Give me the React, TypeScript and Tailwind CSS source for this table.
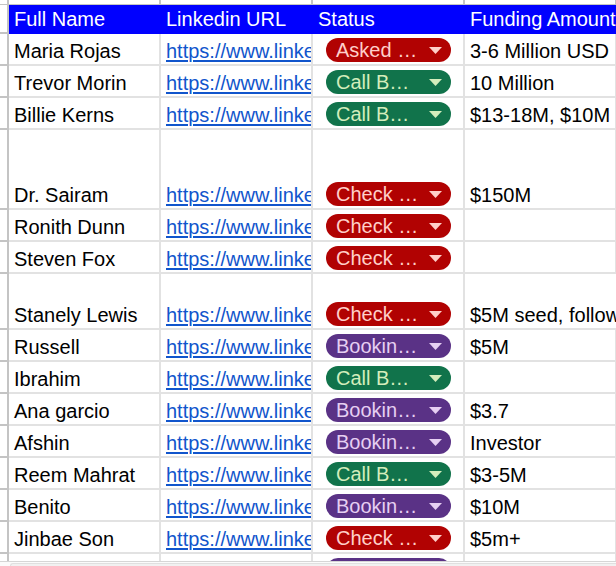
import React from "react";

type Status = "asked" | "call" | "check" | "booking";

type Row = {
  name: string;
  status: Status;
  funding: string;
  h: string;
  spill?: boolean;
};

const rows: Row[] = [
  { name: "Maria Rojas", status: "asked", funding: "3-6 Million USD", h: "h-[32px]" },
  { name: "Trevor Morin", status: "call", funding: "10 Million", h: "h-[32px]" },
  { name: "Billie Kerns", status: "call", funding: "$13-18M, $10M", h: "h-[32px]" },
  { name: "Dr. Sairam", status: "check", funding: "$150M", h: "h-[80px]" },
  { name: "Ronith Dunn", status: "check", funding: "", h: "h-[32px]" },
  { name: "Steven Fox", status: "check", funding: "", h: "h-[32px]" },
  { name: "Stanely Lewis", status: "check", funding: "$5M seed, follow on", h: "h-[56px]", spill: true },
  { name: "Russell", status: "booking", funding: "$5M", h: "h-[32px]" },
  { name: "Ibrahim", status: "call", funding: "", h: "h-[32px]" },
  { name: "Ana garcio", status: "booking", funding: "$3.7", h: "h-[32px]" },
  { name: "Afshin", status: "booking", funding: "Investor", h: "h-[32px]" },
  { name: "Reem Mahrat", status: "call", funding: "$3-5M", h: "h-[32px]" },
  { name: "Benito", status: "booking", funding: "$10M", h: "h-[32px]" },
  { name: "Jinbae Son", status: "check", funding: "$5m+", h: "h-[32px]" },
  { name: "", status: "booking", funding: "", h: "h-[32px]" },
];

const chips: Record<Status, { label: string; bg: string; fg: string; fill: string }> = {
  asked: { label: "Asked …", bg: "bg-[#b10202]", fg: "text-[#ffcfc9]", fill: "#ffcfc9" },
  check: { label: "Check …", bg: "bg-[#b10202]", fg: "text-[#ffcfc9]", fill: "#ffcfc9" },
  call: { label: "Call B…", bg: "bg-[#11734b]", fg: "text-[#d4edbc]", fill: "#d4edbc" },
  booking: { label: "Bookin…", bg: "bg-[#5a3286]", fg: "text-[#e6cff2]", fill: "#e6cff2" },
};

const cell = "flex items-end overflow-hidden whitespace-nowrap border-b-2 border-r-2 border-[#e2e2e2] pl-[5px] pb-[1px]";

function StatusChip({ status }: { status: Status }) {
  const c = chips[status];
  return (
    <div
      className={`ml-[13px] flex h-[24px] w-[125px] shrink-0 items-center gap-1 rounded-full pl-[10px] pr-[9px] ${c.bg}`}
    >
      <span className={`flex-1 whitespace-nowrap leading-[24px] ${c.fg}`}>{c.label}</span>
      <svg width="13" height="7" viewBox="0 0 13 7" className="shrink-0">
        <polygon points="0,0 13,0 6.5,7" fill={c.fill} />
      </svg>
    </div>
  );
}

export default function App() {
  return (
    <div className="flex h-[566px] w-[616px] flex-col overflow-hidden bg-white font-['Liberation_Sans',Arial,sans-serif] text-[20px] leading-[23px] text-black">
      <div className="min-h-0 flex-1 overflow-hidden">
        {/* column header strip, mostly scrolled away */}
        <div className="grid h-[5px] grid-cols-[9px_152px_152px_152px_152px]">
          <div className="border-b border-r-2 border-[#c4c4c4]" />
          <div className="border-b border-r-2 border-[#c4c4c4]" />
          <div className="border-b border-r-2 border-[#c4c4c4]" />
          <div className="border-b border-r-2 border-[#c4c4c4]" />
          <div className="border-b border-r-2 border-[#c4c4c4]" />
        </div>

        {/* header row */}
        <div className="grid h-[29px] grid-cols-[9px_152px_152px_152px_152px]">
          <div className="border-b-2 border-r-2 border-[#c4c4c4]" />
          {["Full Name", "Linkedin URL", "Status", "Funding Amount"].map((t) => (
            <div
              key={t}
              className="flex items-end overflow-hidden whitespace-nowrap bg-[#0000ff] pb-[3px] pl-[5px] text-white"
            >
              {t}
            </div>
          ))}
        </div>

        {rows.map((r, i) => (
          <div key={i} className={`grid grid-cols-[9px_152px_152px_152px_152px] ${r.h}`}>
            <div className="border-b-2 border-r-2 border-[#c4c4c4]" />
            <div className={cell}>{r.name}</div>
            <div className={cell}>
              {r.name && (
                <a
                  href="#"
                  className="text-[#1155cc] underline decoration-2 underline-offset-[2px]"
                >
                  https://www.linkedin.com/in/
                </a>
              )}
            </div>
            <div className="flex items-end overflow-hidden border-b-2 border-r-2 border-[#e2e2e2] pb-[2px]">
              <StatusChip status={r.status} />
            </div>
            <div
              className={
                r.spill
                  ? "flex items-end whitespace-nowrap border-b-2 border-[#e2e2e2] pb-[1px] pl-[5px]"
                  : cell
              }
            >
              {r.funding}
            </div>
          </div>
        ))}
      </div>

      {/* horizontal scrollbar */}
      <div className="flex h-[5px] shrink-0 border-t border-[#d6d6d6] bg-[#fbfbfb]">
        <div className="ml-[10px] mt-[1px] flex-1 rounded-tl-[6px] border-l border-t border-[#e0e0e0] bg-[#f1f1f1]" />
      </div>
    </div>
  );
}
